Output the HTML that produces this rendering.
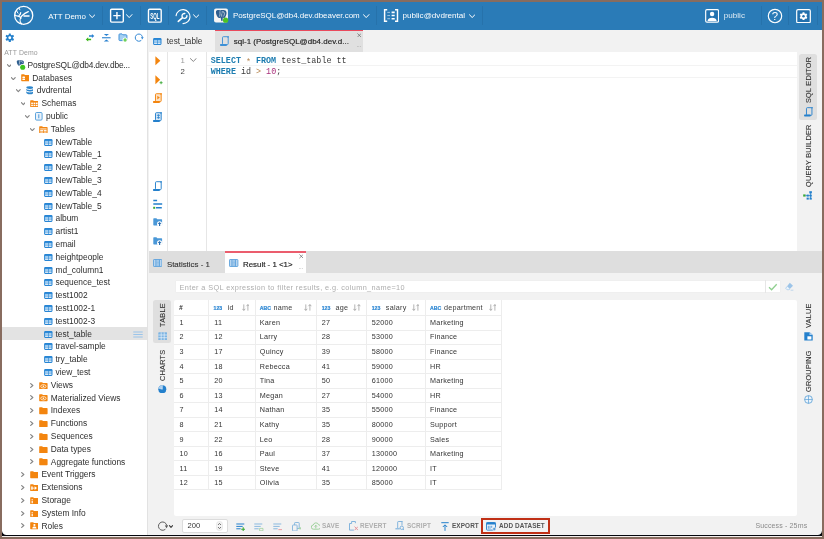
<!DOCTYPE html>
<html><head><meta charset="utf-8"><title>DBeaver</title>
<style>
html,body{margin:0;padding:0}
body{width:824px;height:539px;overflow:hidden;background:#886c5f;font-family:"Liberation Sans",sans-serif;position:relative}
div,span,svg{position:absolute;box-sizing:border-box}
span{white-space:nowrap}
#blk{left:2px;top:2px;width:820px;height:534px;background:#05070d}
#wl{left:2px;top:536px;width:820px;height:1px;background:#f3efec}
#app{will-change:transform;left:0;top:0;width:824px;height:539px;background:#f2f2f2;clip-path:inset(2px 2px 4px 2px round 0 0 4.5px 4.5px)}
#hdr{left:0;top:0;width:824px;height:29.5px;background:#2a7bb7}
.hsep{top:6px;width:1px;height:19px;background:#2672ab}
.ht{color:#fff;font-size:8px;line-height:10px;top:10.6px}
#left{left:2px;top:29px;width:145px;height:510px;background:#fff}
#hdr{z-index:3}
.tr{left:0;height:12.8px;width:145px}
.tt{font-size:8.4px;line-height:12.8px;color:#2e2e2e;top:1.5px}
.vt{font-size:7.3px;color:#333;transform-origin:0 0;transform:rotate(-90deg);line-height:10px;letter-spacing:0.25px;-webkit-text-stroke:0.1px #333}
.tb{font-size:7.2px;line-height:12px;top:520px;font-weight:bold;letter-spacing:0.1px;transform:scaleX(.89);transform-origin:0 0}
.cell{font-size:7.1px;line-height:10px;color:#333;letter-spacing:0.25px}
.hl{height:1px;background:#ededed}
.vl{width:1px;background:#ededed}
.kw{color:#1c7cb0;font-weight:bold}
.op{color:#b98a55}
.num{color:#a8307a}
</style></head><body>
<div id="blk"></div><div id="wl"></div>
<div id="app">

<div id="hdr">
<svg style="left:13px;top:5px" width="21" height="21" viewBox="13 5 21 21"><g fill="none" stroke="#fff" stroke-width="1.25" stroke-linecap="round"><circle cx="23.7" cy="15.4" r="9.05" stroke-width="1.3"/><path d="M21.5 23.9C19.5 21.5 19.7 18 22 15.7 23.8 14 26 12.6 28.3 11.6"/><path d="M24 15.9h5" stroke-width="1.5"/><path d="M15.1 15.2c1.2.8 2.5.9 3.7 1.2 1 .3 1.7.9 2.2 1.9"/><path d="M20.7 12.6c-.1 1.2-.6 2.2-1.7 2.9"/><path d="M19.2 7.6c-.1.8.1 1.5.6 2.2" stroke-width="1"/><path d="M16.7 10.7c.2 1 .6 1.8 1.3 2.5" stroke-width="1"/></g></svg>
<span style="left:48.2px;top:11px;font-size:7.95px;line-height:12px;color:#fff">ATT Demo</span>
<svg style="position:absolute;left:88.6px;top:13.6px" width="6.4" height="4.6" viewBox="0 0 6.4 4.6"><polyline points="0.4,0.6 3.2,3.6 6,0.6" fill="none" stroke="#fff" stroke-width="1" stroke-linecap="round" stroke-linejoin="round"/></svg>
<div class="hsep" style="left:102.4px"></div>
<svg style="left:109px;top:8px" width="16" height="16" viewBox="109 8 16 16"><rect x="110.6" y="9.2" width="12.7" height="12.9" rx="1.1" fill="#2370ae" stroke="#fff" stroke-width="1.4"/><path d="M116.95 12v7.3M113.3 15.65h7.3" stroke="#fff" stroke-width="1.4" fill="none"/></svg>
<svg style="position:absolute;left:126.4px;top:13.8px" width="6.4" height="4.6" viewBox="0 0 6.4 4.6"><polyline points="0.4,0.6 3.2,3.6 6,0.6" fill="none" stroke="#fff" stroke-width="1" stroke-linecap="round" stroke-linejoin="round"/></svg>
<div class="hsep" style="left:140.2px"></div>
<svg style="left:147px;top:8px" width="16" height="16" viewBox="147 8 16 16"><rect x="148.5" y="9.3" width="12.7" height="12.8" rx="1.2" fill="#2370ae" stroke="#fff" stroke-width="1.4"/><text x="154.9" y="18.5" text-anchor="middle" font-family="Liberation Sans, sans-serif" font-weight="bold" font-size="8.2" fill="#fff" textLength="9.4" lengthAdjust="spacingAndGlyphs">SQL</text></svg>
<div class="hsep" style="left:168.2px"></div>
<svg style="left:174px;top:7.5px" width="18" height="18" viewBox="174 7 18 18"><g fill="none" stroke="#fff" stroke-linecap="round"><path d="M176.07 14.63A7 7 0 1 1 183 22.6" stroke-width="1.15"/><path d="M178.3 20.4L182.3 16.8" stroke-width="1.6"/><path d="M186.9 14.7A2.45 2.45 0 1 1 184.8 12.5" stroke-width="1.35"/></g></svg>
<svg style="position:absolute;left:193.1px;top:13.6px" width="6.4" height="4.6" viewBox="0 0 6.4 4.6"><polyline points="0.4,0.6 3.2,3.6 6,0.6" fill="none" stroke="#fff" stroke-width="1" stroke-linecap="round" stroke-linejoin="round"/></svg>
<div class="hsep" style="left:206px"></div>
<svg style="left:213px;top:8px" width="17" height="16" viewBox="213 8 17 16"><rect x="214.05" y="8.5" width="13.9" height="14" rx="1.9" fill="#f7f6f5"/><path d="M216 11.2C216.5 9.8 219 9.6 220 10.4 222 9.6 225 9.8 226 11 227.2 12.6 226.4 15.6 225 17.4 224.2 18.2 223.2 18 222.8 17.6L222.6 20.6C222.4 21.5 221.4 21.5 221.2 20.6L220.6 17.4C219.8 18.4 218.4 18.4 217.6 17 216.6 15.4 215.6 13 216 11.2Z" fill="#2f5f8f"/><g fill="none" stroke="#f7f6f5" stroke-width=".6"><path d="M219.9 11.3c.3 1.8.2 3.6-.3 5.3"/><path d="M221.5 12c1.3-.9 3-.3 3 1.5 0 1.2-.5 2.2-1.1 3"/><path d="M221.7 13.5v3.2"/></g><circle cx="223" cy="12.7" r=".5" fill="#f7f6f5"/><circle cx="225.6" cy="20.2" r="2.65" fill="#4cc322"/></svg>
<span id="h_pg" style="left:232.9px;top:10px;font-size:7.96px;line-height:12px;color:#fff">PostgreSQL@db4.dev.dbeaver.com</span>
<svg style="position:absolute;left:363.2px;top:13.6px" width="6.4" height="4.6" viewBox="0 0 6.4 4.6"><polyline points="0.4,0.6 3.2,3.6 6,0.6" fill="none" stroke="#fff" stroke-width="1" stroke-linecap="round" stroke-linejoin="round"/></svg>
<div class="hsep" style="left:376px"></div>
<svg style="left:383px;top:8px" width="16" height="15" viewBox="383 8 16 15"><g fill="none" stroke="#fff" stroke-width="1.45"><path d="M387.2 9.7H384.6V21.3H387.2M395 9.7H397.5V21.3H395"/></g><g stroke="#fff"><path d="M387.3 12.4h2.7M387.3 15.55h2.7M387.3 18.7h2.7" stroke-width=".9" opacity=".6"/><path d="M391.6 12.4h3.1M391.6 15.55h3.1M391.6 18.7h3.1" stroke-width="1.6"/></g></svg>
<span id="h_pub" style="left:402.5px;top:10px;font-size:8.1px;line-height:12px;color:#fff">public@dvdrental</span>
<svg style="position:absolute;left:468.7px;top:13.6px" width="6.4" height="4.6" viewBox="0 0 6.4 4.6"><polyline points="0.4,0.6 3.2,3.6 6,0.6" fill="none" stroke="#fff" stroke-width="1" stroke-linecap="round" stroke-linejoin="round"/></svg>
<div class="hsep" style="left:482px"></div>
<svg style="left:704.6px;top:8.6px" width="14.4" height="14" viewBox="0 0 15 14.6"><rect x=".7" y=".7" width="13.4" height="13" rx="1.3" fill="#2473b0" stroke="#fff" stroke-width="1.2"/><circle cx="7.4" cy="5.2" r="2.3" fill="#fff"/><path d="M2.6 12.6c.3-2.6 2.2-3.6 4.8-3.6s4.5 1 4.8 3.6z" fill="#fff"/></svg>
<span id="h_user" style="left:723.8px;top:10px;font-size:8.1px;line-height:12px;color:#fff;opacity:.85">public</span>
<div class="hsep" style="left:760.6px"></div>
<svg style="left:766.6px;top:7.6px" width="16" height="16" viewBox="0 0 16 16"><circle cx="8" cy="8" r="6.7" fill="none" stroke="#fff" stroke-width="1.15"/><text x="8" y="12" text-anchor="middle" font-family="Liberation Sans, sans-serif" font-size="11.4" fill="#fff">?</text></svg>
<div class="hsep" style="left:788.2px"></div>
<svg style="left:795.8px;top:8.5px" width="15" height="14.4" viewBox="0 0 15 14.4"><rect x=".7" y=".7" width="13.6" height="13" rx="1.3" fill="#2270ad" stroke="#fff" stroke-width="1.2"/><g transform="translate(7.5 7.2)" fill="#fff"><circle r="2.9"/><g><rect x="-1.05" y="-3.9" width="2.1" height="7.8" rx=".4"/><rect x="-1.05" y="-3.9" width="2.1" height="7.8" rx=".4" transform="rotate(60)"/><rect x="-1.05" y="-3.9" width="2.1" height="7.8" rx=".4" transform="rotate(120)"/></g><circle r="1.25" fill="#2270ad"/></g></svg>
<div class="hsep" style="left:817.4px"></div>
</div>
<div id="left">
<svg style="left:3.2px;top:3.9px" width="9.6" height="9.6" viewBox="-5 -5 10 10"><g fill="#2480cc"><circle r="3.1"/><rect x="-1.1" y="-4.6" width="2.2" height="9.2" rx=".5"/><rect x="-1.1" y="-4.6" width="2.2" height="9.2" rx=".5" transform="rotate(60)"/><rect x="-1.1" y="-4.6" width="2.2" height="9.2" rx=".5" transform="rotate(120)"/></g><circle r="1.5" fill="#fff"/></svg>
<svg style="left:83px;top:4px" width="12" height="9" viewBox="85 33 12 9"><path d="M89 35.25h2.9v-1.3l2.4 2.05-2.4 2.05v-1.3H89z" fill="#2a82d0"/><path d="M91.1 38.65h-2.9v-1.3l-2.4 2.05 2.4 2.05v-1.3h2.9z" fill="#3db81a"/></svg>
<svg style="left:100px;top:4px" width="10" height="9" viewBox="102 33 10 9"><g fill="#2a82d0"><rect x="102" y="37.2" width="8.6" height="1.1"/><path d="M103.8 33.9h5.2l-2.6 2.2z"/><path d="M103.8 41.6h5.2l-2.6-2.2z"/></g></svg>
<svg style="left:116px;top:4px" width="12" height="9" viewBox="118 33 12 9"><path d="M119 34.7c0-.5.3-.8.8-.8h2.2l.9.9h3.2c.5 0 .8.3.8.8v4.2c0 .5-.3.8-.8.8h-6.3c-.5 0-.8-.3-.8-.8z" fill="#a5d0f2" stroke="#3d8fd8" stroke-width=".95"/><circle cx="125.1" cy="40" r="2.6" fill="#fff"/><circle cx="125.1" cy="40" r="1.65" fill="#6fcf5c"/></svg>
<svg style="left:131.8px;top:3.7px" width="10" height="9" viewBox="0 0 10 9"><path d="M7.3 7.3A3.6 3.6 0 1 1 8.4 3.9" fill="none" stroke="#3488d4" stroke-width="1"/><path d="M9.6 3.9L8.4 6.4 6.9 4.3z" fill="#3488d4"/></svg>
<span id="attdemo" style="left:2.2px;top:18px;font-size:6.9px;line-height:12px;color:#9a9a9a;letter-spacing:.1px">ATT Demo</span>
<div class="tr" style="top:29.8px">
<svg style="position:absolute;left:4.7px;top:5.1px" width="4.6" height="3.6" viewBox="0 0 4.6 3.6"><polyline points="0.4,0.6 2.3,2.6 4.199999999999999,0.6" fill="none" stroke="#858585" stroke-width="1.15" stroke-linecap="round" stroke-linejoin="round"/></svg>
<svg style="left:14px;top:1.4px" width="10.5" height="10.5" viewBox="0 0 10.5 10.5"><g transform="translate(-142.8 -6.4) scale(.665)"><path d="M216 11.2C216.5 9.8 219 9.6 220 10.4 222 9.6 225 9.8 226 11 227.2 12.6 226.4 15.6 225 17.4 224.2 18.2 223.2 18 222.8 17.6L222.6 20.6C222.4 21.5 221.4 21.5 221.2 20.6L220.6 17.4C219.8 18.4 218.4 18.4 217.6 17 216.6 15.4 215.6 13 216 11.2Z" fill="#2f5f8f"/><g fill="none" stroke="#fff" stroke-width=".8"><path d="M219.9 11.3c.3 1.8.2 3.6-.3 5.3"/><path d="M221.5 12c1.3-.9 3-.3 3 1.5"/></g></g><circle cx="6.7" cy="7.2" r="3.1" fill="#fff"/><circle cx="6.7" cy="7.2" r="2.55" fill="#3ec41e"/></svg>
<span style="left:25.5px;top:0.2px;font-size:8.4px;line-height:12px;color:#2e2e2e;letter-spacing:-.17px">PostgreSQL@db4.dev.dbe...</span>
</div>
<div class="tr" style="top:42.6px">
<svg style="position:absolute;left:9.4px;top:5.1px" width="4.6" height="3.6" viewBox="0 0 4.6 3.6"><polyline points="0.4,0.6 2.3,2.6 4.199999999999999,0.6" fill="none" stroke="#858585" stroke-width="1.15" stroke-linecap="round" stroke-linejoin="round"/></svg>
<svg style="left:18.5px;top:2.9px" width="8.8" height="7.4" viewBox="0 0 8.8 7.4"><path d="M.2 .8c0-.4.2-.6.6-.6h2.3l.9.9H8c.4 0 .6.2.6.6v4.9c0 .4-.2.6-.6.6H.8c-.4 0-.6-.2-.6-.6z" fill="#f3850f"/><g fill="#fff"><rect x="1.4" y="2.6" width="2.6" height="1.4" rx=".5"/><rect x="1.4" y="4.5" width="2.6" height="1.6" rx=".5"/></g></svg>
<span style="left:30.2px;top:0.4px;font-size:8.4px;line-height:12px;color:#2e2e2e">Databases</span>
</div>
<div class="tr" style="top:55.4px">
<svg style="position:absolute;left:14px;top:5.1px" width="4.6" height="3.6" viewBox="0 0 4.6 3.6"><polyline points="0.4,0.6 2.3,2.6 4.199999999999999,0.6" fill="none" stroke="#858585" stroke-width="1.15" stroke-linecap="round" stroke-linejoin="round"/></svg>
<svg style="left:23.9px;top:2.1px" width="7.6" height="8.6" viewBox="0 0 7.6 8.6"><g fill="#2d86cc"><ellipse cx="3.8" cy="1.6" rx="3.5" ry="1.4"/><path d="M.3 2.7c.5.8 2 1.2 3.5 1.2s3-.4 3.5-1.2v1.4c0 .8-1.6 1.4-3.5 1.4S.3 4.9.3 4.1z"/><path d="M.3 5.2c.5.8 2 1.2 3.5 1.2s3-.4 3.5-1.2v1.6c0 .8-1.6 1.5-3.5 1.5S.3 7.6.3 6.8z"/></g></svg>
<span style="left:34.8px;top:-0.4px;font-size:8.4px;line-height:12px;color:#2e2e2e">dvdrental</span>
</div>
<div class="tr" style="top:68.2px">
<svg style="position:absolute;left:18.7px;top:5.1px" width="4.6" height="3.6" viewBox="0 0 4.6 3.6"><polyline points="0.4,0.6 2.3,2.6 4.199999999999999,0.6" fill="none" stroke="#858585" stroke-width="1.15" stroke-linecap="round" stroke-linejoin="round"/></svg>
<svg style="left:27.7px;top:2.9px" width="8.8" height="7.4" viewBox="0 0 8.8 7.4"><path d="M.2 .8c0-.4.2-.6.6-.6h2.3l.9.9H8c.4 0 .6.2.6.6v4.9c0 .4-.2.6-.6.6H.8c-.4 0-.6-.2-.6-.6z" fill="#f3850f"/><g fill="#fff"><rect x="1.2" y="2.6" width="1.7" height="1.4"/><rect x="3.55" y="2.6" width="1.7" height="1.4"/><rect x="5.9" y="2.6" width="1.7" height="1.4"/><rect x="1.2" y="4.7" width="1.7" height="1.4"/><rect x="3.55" y="4.7" width="1.7" height="1.4"/><rect x="5.9" y="4.7" width="1.7" height="1.4"/></g></svg>
<span style="left:39.5px;top:-0.2px;font-size:8.4px;line-height:12px;color:#2e2e2e">Schemas</span>
</div>
<div class="tr" style="top:81px">
<svg style="position:absolute;left:23.3px;top:5.1px" width="4.6" height="3.6" viewBox="0 0 4.6 3.6"><polyline points="0.4,0.6 2.3,2.6 4.199999999999999,0.6" fill="none" stroke="#858585" stroke-width="1.15" stroke-linecap="round" stroke-linejoin="round"/></svg>
<svg style="left:33px;top:2.1px" width="7.6" height="8.6" viewBox="0 0 7.6 8.6"><rect x=".5" y=".5" width="6.6" height="7.6" rx="1.1" fill="#e9f2fb" stroke="#4a98d8" stroke-width=".9"/><rect x="3.3" y="2.3" width="1" height="4" fill="#4a98d8"/></svg>
<span style="left:44.1px;top:0px;font-size:8.4px;line-height:12px;color:#2e2e2e">public</span>
</div>
<div class="tr" style="top:93.8px">
<svg style="position:absolute;left:28px;top:5.1px" width="4.6" height="3.6" viewBox="0 0 4.6 3.6"><polyline points="0.4,0.6 2.3,2.6 4.199999999999999,0.6" fill="none" stroke="#858585" stroke-width="1.15" stroke-linecap="round" stroke-linejoin="round"/></svg>
<svg style="left:36.9px;top:2.9px" width="8.8" height="7.4" viewBox="0 0 8.8 7.4"><path d="M.2 .8c0-.4.2-.6.6-.6h2.3l.9.9H8c.4 0 .6.2.6.6v4.9c0 .4-.2.6-.6.6H.8c-.4 0-.6-.2-.6-.6z" fill="#f3850f"/><g fill="#fff"><rect x="1.2" y="2.5" width="6.4" height=".9"/><rect x="1.2" y="4.1" width="2.8" height="1"/><rect x="4.7" y="4.1" width="2.9" height="1"/><rect x="1.2" y="5.6" width="2.8" height=".9"/><rect x="4.7" y="5.6" width="2.9" height=".9"/></g></svg>
<span style="left:48.8px;top:0.2px;font-size:8.4px;line-height:12px;color:#2e2e2e">Tables</span>
</div>
<div class="tr" style="top:106.6px">
<svg style="left:42px;top:3px" width="8.6" height="7" viewBox="0 0 8.6 7"><rect x=".1" y=".1" width="8.4" height="6.8" rx="1.1" fill="#2785d4"/><g fill="#9ccbf1"><rect x="1.1" y="1.9" width="2.9" height="2.1"/><rect x="4.6" y="1.9" width="2.9" height="2.1"/></g><g fill="#fff"><rect x="1.1" y="4.5" width="2.9" height="1.3"/><rect x="4.6" y="4.5" width="2.9" height="1.3"/></g></svg>
<span style="left:53.5px;top:0.4px;font-size:8.4px;line-height:12px;color:#2e2e2e">NewTable</span>
</div>
<div class="tr" style="top:119.4px">
<svg style="left:42px;top:3px" width="8.6" height="7" viewBox="0 0 8.6 7"><rect x=".1" y=".1" width="8.4" height="6.8" rx="1.1" fill="#2785d4"/><g fill="#9ccbf1"><rect x="1.1" y="1.9" width="2.9" height="2.1"/><rect x="4.6" y="1.9" width="2.9" height="2.1"/></g><g fill="#fff"><rect x="1.1" y="4.5" width="2.9" height="1.3"/><rect x="4.6" y="4.5" width="2.9" height="1.3"/></g></svg>
<span style="left:53.5px;top:-0.4px;font-size:8.4px;line-height:12px;color:#2e2e2e">NewTable_1</span>
</div>
<div class="tr" style="top:132.2px">
<svg style="left:42px;top:3px" width="8.6" height="7" viewBox="0 0 8.6 7"><rect x=".1" y=".1" width="8.4" height="6.8" rx="1.1" fill="#2785d4"/><g fill="#9ccbf1"><rect x="1.1" y="1.9" width="2.9" height="2.1"/><rect x="4.6" y="1.9" width="2.9" height="2.1"/></g><g fill="#fff"><rect x="1.1" y="4.5" width="2.9" height="1.3"/><rect x="4.6" y="4.5" width="2.9" height="1.3"/></g></svg>
<span style="left:53.5px;top:-0.2px;font-size:8.4px;line-height:12px;color:#2e2e2e">NewTable_2</span>
</div>
<div class="tr" style="top:145px">
<svg style="left:42px;top:3px" width="8.6" height="7" viewBox="0 0 8.6 7"><rect x=".1" y=".1" width="8.4" height="6.8" rx="1.1" fill="#2785d4"/><g fill="#9ccbf1"><rect x="1.1" y="1.9" width="2.9" height="2.1"/><rect x="4.6" y="1.9" width="2.9" height="2.1"/></g><g fill="#fff"><rect x="1.1" y="4.5" width="2.9" height="1.3"/><rect x="4.6" y="4.5" width="2.9" height="1.3"/></g></svg>
<span style="left:53.5px;top:0px;font-size:8.4px;line-height:12px;color:#2e2e2e">NewTable_3</span>
</div>
<div class="tr" style="top:157.8px">
<svg style="left:42px;top:3px" width="8.6" height="7" viewBox="0 0 8.6 7"><rect x=".1" y=".1" width="8.4" height="6.8" rx="1.1" fill="#2785d4"/><g fill="#9ccbf1"><rect x="1.1" y="1.9" width="2.9" height="2.1"/><rect x="4.6" y="1.9" width="2.9" height="2.1"/></g><g fill="#fff"><rect x="1.1" y="4.5" width="2.9" height="1.3"/><rect x="4.6" y="4.5" width="2.9" height="1.3"/></g></svg>
<span style="left:53.5px;top:0.2px;font-size:8.4px;line-height:12px;color:#2e2e2e">NewTable_4</span>
</div>
<div class="tr" style="top:170.6px">
<svg style="left:42px;top:3px" width="8.6" height="7" viewBox="0 0 8.6 7"><rect x=".1" y=".1" width="8.4" height="6.8" rx="1.1" fill="#2785d4"/><g fill="#9ccbf1"><rect x="1.1" y="1.9" width="2.9" height="2.1"/><rect x="4.6" y="1.9" width="2.9" height="2.1"/></g><g fill="#fff"><rect x="1.1" y="4.5" width="2.9" height="1.3"/><rect x="4.6" y="4.5" width="2.9" height="1.3"/></g></svg>
<span style="left:53.5px;top:0.4px;font-size:8.4px;line-height:12px;color:#2e2e2e">NewTable_5</span>
</div>
<div class="tr" style="top:183.4px">
<svg style="left:42px;top:3px" width="8.6" height="7" viewBox="0 0 8.6 7"><rect x=".1" y=".1" width="8.4" height="6.8" rx="1.1" fill="#2785d4"/><g fill="#9ccbf1"><rect x="1.1" y="1.9" width="2.9" height="2.1"/><rect x="4.6" y="1.9" width="2.9" height="2.1"/></g><g fill="#fff"><rect x="1.1" y="4.5" width="2.9" height="1.3"/><rect x="4.6" y="4.5" width="2.9" height="1.3"/></g></svg>
<span style="left:53.5px;top:-0.4px;font-size:8.4px;line-height:12px;color:#2e2e2e">album</span>
</div>
<div class="tr" style="top:196.2px">
<svg style="left:42px;top:3px" width="8.6" height="7" viewBox="0 0 8.6 7"><rect x=".1" y=".1" width="8.4" height="6.8" rx="1.1" fill="#2785d4"/><g fill="#9ccbf1"><rect x="1.1" y="1.9" width="2.9" height="2.1"/><rect x="4.6" y="1.9" width="2.9" height="2.1"/></g><g fill="#fff"><rect x="1.1" y="4.5" width="2.9" height="1.3"/><rect x="4.6" y="4.5" width="2.9" height="1.3"/></g></svg>
<span style="left:53.5px;top:-0.2px;font-size:8.4px;line-height:12px;color:#2e2e2e">artist1</span>
</div>
<div class="tr" style="top:209px">
<svg style="left:42px;top:3px" width="8.6" height="7" viewBox="0 0 8.6 7"><rect x=".1" y=".1" width="8.4" height="6.8" rx="1.1" fill="#2785d4"/><g fill="#9ccbf1"><rect x="1.1" y="1.9" width="2.9" height="2.1"/><rect x="4.6" y="1.9" width="2.9" height="2.1"/></g><g fill="#fff"><rect x="1.1" y="4.5" width="2.9" height="1.3"/><rect x="4.6" y="4.5" width="2.9" height="1.3"/></g></svg>
<span style="left:53.5px;top:0px;font-size:8.4px;line-height:12px;color:#2e2e2e">email</span>
</div>
<div class="tr" style="top:221.8px">
<svg style="left:42px;top:3px" width="8.6" height="7" viewBox="0 0 8.6 7"><rect x=".1" y=".1" width="8.4" height="6.8" rx="1.1" fill="#2785d4"/><g fill="#9ccbf1"><rect x="1.1" y="1.9" width="2.9" height="2.1"/><rect x="4.6" y="1.9" width="2.9" height="2.1"/></g><g fill="#fff"><rect x="1.1" y="4.5" width="2.9" height="1.3"/><rect x="4.6" y="4.5" width="2.9" height="1.3"/></g></svg>
<span style="left:53.5px;top:0.2px;font-size:8.4px;line-height:12px;color:#2e2e2e">heightpeople</span>
</div>
<div class="tr" style="top:234.6px">
<svg style="left:42px;top:3px" width="8.6" height="7" viewBox="0 0 8.6 7"><rect x=".1" y=".1" width="8.4" height="6.8" rx="1.1" fill="#2785d4"/><g fill="#9ccbf1"><rect x="1.1" y="1.9" width="2.9" height="2.1"/><rect x="4.6" y="1.9" width="2.9" height="2.1"/></g><g fill="#fff"><rect x="1.1" y="4.5" width="2.9" height="1.3"/><rect x="4.6" y="4.5" width="2.9" height="1.3"/></g></svg>
<span style="left:53.5px;top:0.4px;font-size:8.4px;line-height:12px;color:#2e2e2e">md_column1</span>
</div>
<div class="tr" style="top:247.4px">
<svg style="left:42px;top:3px" width="8.6" height="7" viewBox="0 0 8.6 7"><rect x=".1" y=".1" width="8.4" height="6.8" rx="1.1" fill="#2785d4"/><g fill="#9ccbf1"><rect x="1.1" y="1.9" width="2.9" height="2.1"/><rect x="4.6" y="1.9" width="2.9" height="2.1"/></g><g fill="#fff"><rect x="1.1" y="4.5" width="2.9" height="1.3"/><rect x="4.6" y="4.5" width="2.9" height="1.3"/></g></svg>
<span style="left:53.5px;top:-0.4px;font-size:8.4px;line-height:12px;color:#2e2e2e">sequence_test</span>
</div>
<div class="tr" style="top:260.2px">
<svg style="left:42px;top:3px" width="8.6" height="7" viewBox="0 0 8.6 7"><rect x=".1" y=".1" width="8.4" height="6.8" rx="1.1" fill="#2785d4"/><g fill="#9ccbf1"><rect x="1.1" y="1.9" width="2.9" height="2.1"/><rect x="4.6" y="1.9" width="2.9" height="2.1"/></g><g fill="#fff"><rect x="1.1" y="4.5" width="2.9" height="1.3"/><rect x="4.6" y="4.5" width="2.9" height="1.3"/></g></svg>
<span style="left:53.5px;top:-0.2px;font-size:8.4px;line-height:12px;color:#2e2e2e">test1002</span>
</div>
<div class="tr" style="top:273px">
<svg style="left:42px;top:3px" width="8.6" height="7" viewBox="0 0 8.6 7"><rect x=".1" y=".1" width="8.4" height="6.8" rx="1.1" fill="#2785d4"/><g fill="#9ccbf1"><rect x="1.1" y="1.9" width="2.9" height="2.1"/><rect x="4.6" y="1.9" width="2.9" height="2.1"/></g><g fill="#fff"><rect x="1.1" y="4.5" width="2.9" height="1.3"/><rect x="4.6" y="4.5" width="2.9" height="1.3"/></g></svg>
<span style="left:53.5px;top:0px;font-size:8.4px;line-height:12px;color:#2e2e2e">test1002-1</span>
</div>
<div class="tr" style="top:285.8px">
<svg style="left:42px;top:3px" width="8.6" height="7" viewBox="0 0 8.6 7"><rect x=".1" y=".1" width="8.4" height="6.8" rx="1.1" fill="#2785d4"/><g fill="#9ccbf1"><rect x="1.1" y="1.9" width="2.9" height="2.1"/><rect x="4.6" y="1.9" width="2.9" height="2.1"/></g><g fill="#fff"><rect x="1.1" y="4.5" width="2.9" height="1.3"/><rect x="4.6" y="4.5" width="2.9" height="1.3"/></g></svg>
<span style="left:53.5px;top:0.2px;font-size:8.4px;line-height:12px;color:#2e2e2e">test1002-3</span>
</div>
<div style="left:0;top:298px;width:145px;height:13.2px;background:#e3e3e3"></div>
<div class="tr" style="top:298.6px">
<svg style="left:42px;top:3px" width="8.6" height="7" viewBox="0 0 8.6 7"><rect x=".1" y=".1" width="8.4" height="6.8" rx="1.1" fill="#2785d4"/><g fill="#9ccbf1"><rect x="1.1" y="1.9" width="2.9" height="2.1"/><rect x="4.6" y="1.9" width="2.9" height="2.1"/></g><g fill="#fff"><rect x="1.1" y="4.5" width="2.9" height="1.3"/><rect x="4.6" y="4.5" width="2.9" height="1.3"/></g></svg>
<span style="left:53.5px;top:0.4px;font-size:8.4px;line-height:12px;color:#2e2e2e">test_table</span>
<svg style="left:131px;top:3.2px" width="10" height="7" viewBox="0 0 10 7"><path d="M.3 1h9.4M.3 3.5h9.4M.3 6h9.4" stroke="#96c2ea" stroke-width=".95"/></svg>
</div>
<div class="tr" style="top:311.4px">
<svg style="left:42px;top:3px" width="8.6" height="7" viewBox="0 0 8.6 7"><rect x=".1" y=".1" width="8.4" height="6.8" rx="1.1" fill="#2785d4"/><g fill="#9ccbf1"><rect x="1.1" y="1.9" width="2.9" height="2.1"/><rect x="4.6" y="1.9" width="2.9" height="2.1"/></g><g fill="#fff"><rect x="1.1" y="4.5" width="2.9" height="1.3"/><rect x="4.6" y="4.5" width="2.9" height="1.3"/></g></svg>
<span style="left:53.5px;top:-0.4px;font-size:8.4px;line-height:12px;color:#2e2e2e">travel-sample</span>
</div>
<div class="tr" style="top:324.2px">
<svg style="left:42px;top:3px" width="8.6" height="7" viewBox="0 0 8.6 7"><rect x=".1" y=".1" width="8.4" height="6.8" rx="1.1" fill="#2785d4"/><g fill="#9ccbf1"><rect x="1.1" y="1.9" width="2.9" height="2.1"/><rect x="4.6" y="1.9" width="2.9" height="2.1"/></g><g fill="#fff"><rect x="1.1" y="4.5" width="2.9" height="1.3"/><rect x="4.6" y="4.5" width="2.9" height="1.3"/></g></svg>
<span style="left:53.5px;top:-0.2px;font-size:8.4px;line-height:12px;color:#2e2e2e">try_table</span>
</div>
<div class="tr" style="top:337px">
<svg style="left:42px;top:3px" width="8.6" height="7" viewBox="0 0 8.6 7"><rect x=".1" y=".1" width="8.4" height="6.8" rx="1.1" fill="#2785d4"/><g fill="#9ccbf1"><rect x="1.1" y="1.9" width="2.9" height="2.1"/><rect x="4.6" y="1.9" width="2.9" height="2.1"/></g><g fill="#fff"><rect x="1.1" y="4.5" width="2.9" height="1.3"/><rect x="4.6" y="4.5" width="2.9" height="1.3"/></g></svg>
<span style="left:53.5px;top:-0px;font-size:8.4px;line-height:12px;color:#2e2e2e">view_test</span>
</div>
<div class="tr" style="top:349.8px">
<svg style="position:absolute;left:28.4px;top:3.9px" width="3.6" height="5" viewBox="0 0 3.6 5"><polyline points="0.7,0.6 2.8,2.5 0.7,4.4" fill="none" stroke="#858585" stroke-width="1.2" stroke-linecap="round" stroke-linejoin="round"/></svg>
<svg style="left:36.9px;top:2.9px" width="8.8" height="7.4" viewBox="0 0 8.8 7.4"><path d="M.2 .8c0-.4.2-.6.6-.6h2.3l.9.9H8c.4 0 .6.2.6.6v4.9c0 .4-.2.6-.6.6H.8c-.4 0-.6-.2-.6-.6z" fill="#f3850f"/><ellipse cx="4.4" cy="4.3" rx="2.7" ry="1.7" fill="none" stroke="#fff" stroke-width=".7"/><circle cx="4.4" cy="4.3" r=".8" fill="#fff"/></svg>
<span style="left:48.8px;top:0.2px;font-size:8.4px;line-height:12px;color:#2e2e2e">Views</span>
</div>
<div class="tr" style="top:362.6px">
<svg style="position:absolute;left:28.4px;top:3.9px" width="3.6" height="5" viewBox="0 0 3.6 5"><polyline points="0.7,0.6 2.8,2.5 0.7,4.4" fill="none" stroke="#858585" stroke-width="1.2" stroke-linecap="round" stroke-linejoin="round"/></svg>
<svg style="left:36.9px;top:2.9px" width="8.8" height="7.4" viewBox="0 0 8.8 7.4"><path d="M.2 .8c0-.4.2-.6.6-.6h2.3l.9.9H8c.4 0 .6.2.6.6v4.9c0 .4-.2.6-.6.6H.8c-.4 0-.6-.2-.6-.6z" fill="#f3850f"/><ellipse cx="4.4" cy="4.3" rx="2.7" ry="1.7" fill="none" stroke="#fff" stroke-width=".7"/><circle cx="4.4" cy="4.3" r=".8" fill="#fff"/></svg>
<span style="left:48.8px;top:0.4px;font-size:8.4px;line-height:12px;color:#2e2e2e">Materialized Views</span>
</div>
<div class="tr" style="top:375.4px">
<svg style="position:absolute;left:28.4px;top:3.9px" width="3.6" height="5" viewBox="0 0 3.6 5"><polyline points="0.7,0.6 2.8,2.5 0.7,4.4" fill="none" stroke="#858585" stroke-width="1.2" stroke-linecap="round" stroke-linejoin="round"/></svg>
<svg style="left:36.9px;top:2.9px" width="8.8" height="7.4" viewBox="0 0 8.8 7.4"><path d="M.2 .8c0-.4.2-.6.6-.6h2.3l.9.9H8c.4 0 .6.2.6.6v4.9c0 .4-.2.6-.6.6H.8c-.4 0-.6-.2-.6-.6z" fill="#f3850f"/></svg>
<span style="left:48.8px;top:-0.4px;font-size:8.4px;line-height:12px;color:#2e2e2e">Indexes</span>
</div>
<div class="tr" style="top:388.2px">
<svg style="position:absolute;left:28.4px;top:3.9px" width="3.6" height="5" viewBox="0 0 3.6 5"><polyline points="0.7,0.6 2.8,2.5 0.7,4.4" fill="none" stroke="#858585" stroke-width="1.2" stroke-linecap="round" stroke-linejoin="round"/></svg>
<svg style="left:36.9px;top:2.9px" width="8.8" height="7.4" viewBox="0 0 8.8 7.4"><path d="M.2 .8c0-.4.2-.6.6-.6h2.3l.9.9H8c.4 0 .6.2.6.6v4.9c0 .4-.2.6-.6.6H.8c-.4 0-.6-.2-.6-.6z" fill="#f3850f"/></svg>
<span style="left:48.8px;top:-0.2px;font-size:8.4px;line-height:12px;color:#2e2e2e">Functions</span>
</div>
<div class="tr" style="top:401px">
<svg style="position:absolute;left:28.4px;top:3.9px" width="3.6" height="5" viewBox="0 0 3.6 5"><polyline points="0.7,0.6 2.8,2.5 0.7,4.4" fill="none" stroke="#858585" stroke-width="1.2" stroke-linecap="round" stroke-linejoin="round"/></svg>
<svg style="left:36.9px;top:2.9px" width="8.8" height="7.4" viewBox="0 0 8.8 7.4"><path d="M.2 .8c0-.4.2-.6.6-.6h2.3l.9.9H8c.4 0 .6.2.6.6v4.9c0 .4-.2.6-.6.6H.8c-.4 0-.6-.2-.6-.6z" fill="#f3850f"/></svg>
<span style="left:48.8px;top:-0px;font-size:8.4px;line-height:12px;color:#2e2e2e">Sequences</span>
</div>
<div class="tr" style="top:413.8px">
<svg style="position:absolute;left:28.4px;top:3.9px" width="3.6" height="5" viewBox="0 0 3.6 5"><polyline points="0.7,0.6 2.8,2.5 0.7,4.4" fill="none" stroke="#858585" stroke-width="1.2" stroke-linecap="round" stroke-linejoin="round"/></svg>
<svg style="left:36.9px;top:2.9px" width="8.8" height="7.4" viewBox="0 0 8.8 7.4"><path d="M.2 .8c0-.4.2-.6.6-.6h2.3l.9.9H8c.4 0 .6.2.6.6v4.9c0 .4-.2.6-.6.6H.8c-.4 0-.6-.2-.6-.6z" fill="#f3850f"/></svg>
<span style="left:48.8px;top:0.2px;font-size:8.4px;line-height:12px;color:#2e2e2e">Data types</span>
</div>
<div class="tr" style="top:426.6px">
<svg style="position:absolute;left:28.4px;top:3.9px" width="3.6" height="5" viewBox="0 0 3.6 5"><polyline points="0.7,0.6 2.8,2.5 0.7,4.4" fill="none" stroke="#858585" stroke-width="1.2" stroke-linecap="round" stroke-linejoin="round"/></svg>
<svg style="left:36.9px;top:2.9px" width="8.8" height="7.4" viewBox="0 0 8.8 7.4"><path d="M.2 .8c0-.4.2-.6.6-.6h2.3l.9.9H8c.4 0 .6.2.6.6v4.9c0 .4-.2.6-.6.6H.8c-.4 0-.6-.2-.6-.6z" fill="#f3850f"/></svg>
<span style="left:48.8px;top:0.4px;font-size:8.4px;line-height:12px;color:#2e2e2e">Aggregate functions</span>
</div>
<div class="tr" style="top:439.4px">
<svg style="position:absolute;left:19.1px;top:3.9px" width="3.6" height="5" viewBox="0 0 3.6 5"><polyline points="0.7,0.6 2.8,2.5 0.7,4.4" fill="none" stroke="#858585" stroke-width="1.2" stroke-linecap="round" stroke-linejoin="round"/></svg>
<svg style="left:27.7px;top:2.9px" width="8.8" height="7.4" viewBox="0 0 8.8 7.4"><path d="M.2 .8c0-.4.2-.6.6-.6h2.3l.9.9H8c.4 0 .6.2.6.6v4.9c0 .4-.2.6-.6.6H.8c-.4 0-.6-.2-.6-.6z" fill="#f3850f"/></svg>
<span style="left:39.5px;top:-0.4px;font-size:8.4px;line-height:12px;color:#2e2e2e">Event Triggers</span>
</div>
<div class="tr" style="top:452.2px">
<svg style="position:absolute;left:19.1px;top:3.9px" width="3.6" height="5" viewBox="0 0 3.6 5"><polyline points="0.7,0.6 2.8,2.5 0.7,4.4" fill="none" stroke="#858585" stroke-width="1.2" stroke-linecap="round" stroke-linejoin="round"/></svg>
<svg style="left:27.7px;top:2.9px" width="8.8" height="7.4" viewBox="0 0 8.8 7.4"><path d="M.2 .8c0-.4.2-.6.6-.6h2.3l.9.9H8c.4 0 .6.2.6.6v4.9c0 .4-.2.6-.6.6H.8c-.4 0-.6-.2-.6-.6z" fill="#f3850f"/><g fill="#fff"><rect x="1.3" y="3.7" width="3.4" height=".8"/><path d="M4.6 2.3l2.4 1.8-2.4 1.8z"/><rect x="1.3" y="2.4" width="1.3" height="3.4"/></g></svg>
<span style="left:39.5px;top:-0.2px;font-size:8.4px;line-height:12px;color:#2e2e2e">Extensions</span>
</div>
<div class="tr" style="top:465px">
<svg style="position:absolute;left:19.1px;top:3.9px" width="3.6" height="5" viewBox="0 0 3.6 5"><polyline points="0.7,0.6 2.8,2.5 0.7,4.4" fill="none" stroke="#858585" stroke-width="1.2" stroke-linecap="round" stroke-linejoin="round"/></svg>
<svg style="left:27.7px;top:2.9px" width="8.8" height="7.4" viewBox="0 0 8.8 7.4"><path d="M.2 .8c0-.4.2-.6.6-.6h2.3l.9.9H8c.4 0 .6.2.6.6v4.9c0 .4-.2.6-.6.6H.8c-.4 0-.6-.2-.6-.6z" fill="#f3850f"/><g fill="#fff"><rect x="1.6" y="2.2" width="1.2" height="1.1"/><rect x="1.6" y="3.9" width="1.2" height="2.4"/></g></svg>
<span style="left:39.5px;top:-0px;font-size:8.4px;line-height:12px;color:#2e2e2e">Storage</span>
</div>
<div class="tr" style="top:477.8px">
<svg style="position:absolute;left:19.1px;top:3.9px" width="3.6" height="5" viewBox="0 0 3.6 5"><polyline points="0.7,0.6 2.8,2.5 0.7,4.4" fill="none" stroke="#858585" stroke-width="1.2" stroke-linecap="round" stroke-linejoin="round"/></svg>
<svg style="left:27.7px;top:2.9px" width="8.8" height="7.4" viewBox="0 0 8.8 7.4"><path d="M.2 .8c0-.4.2-.6.6-.6h2.3l.9.9H8c.4 0 .6.2.6.6v4.9c0 .4-.2.6-.6.6H.8c-.4 0-.6-.2-.6-.6z" fill="#f3850f"/><g fill="#fff"><rect x="1.6" y="2.2" width="1.2" height="1.1"/><rect x="1.6" y="3.9" width="1.2" height="2.4"/></g></svg>
<span style="left:39.5px;top:0.2px;font-size:8.4px;line-height:12px;color:#2e2e2e">System Info</span>
</div>
<div class="tr" style="top:490.6px">
<svg style="position:absolute;left:19.1px;top:3.9px" width="3.6" height="5" viewBox="0 0 3.6 5"><polyline points="0.7,0.6 2.8,2.5 0.7,4.4" fill="none" stroke="#858585" stroke-width="1.2" stroke-linecap="round" stroke-linejoin="round"/></svg>
<svg style="left:27.7px;top:2.9px" width="8.8" height="7.4" viewBox="0 0 8.8 7.4"><path d="M.2 .8c0-.4.2-.6.6-.6h2.3l.9.9H8c.4 0 .6.2.6.6v4.9c0 .4-.2.6-.6.6H.8c-.4 0-.6-.2-.6-.6z" fill="#f3850f"/><g fill="#fff"><circle cx="4.4" cy="3" r="1.1"/><path d="M2.3 6.4c.1-1.4 1-1.9 2.1-1.9s2 .5 2.1 1.9z"/></g></svg>
<span style="left:39.5px;top:0.4px;font-size:8.4px;line-height:12px;color:#2e2e2e">Roles</span>
</div>
</div>
<div style="left:147px;top:29.5px;width:1.2px;height:510px;background:#e2e2e2"></div>
<div style="left:148.5px;top:29.5px;width:675px;height:22.2px;background:#f2f2f2"></div>
<div style="left:215px;top:29.5px;width:148.2px;height:22.2px;background:#e0e0e0;border-top:1.7px solid #ea4a5c"></div>
<svg style="left:153.4px;top:37.9px" width="8.6" height="7" viewBox="0 0 8.6 7"><rect x=".1" y=".1" width="8.4" height="6.8" rx="1.1" fill="#2785d4"/><g fill="#9ccbf1"><rect x="1.1" y="1.9" width="2.9" height="2.1"/><rect x="4.6" y="1.9" width="2.9" height="2.1"/></g><g fill="#fff"><rect x="1.1" y="4.5" width="2.9" height="1.3"/><rect x="4.6" y="4.5" width="2.9" height="1.3"/></g></svg>
<span id="tab1" style="left:166.8px;top:36px;font-size:8.2px;line-height:12px;color:#333">test_table</span>
<svg style="left:219.8px;top:35.9px" width="9.4" height="10" viewBox="0 0 9.4 10"><rect x="2.5" y=".7" width="5.7" height="8" rx=".9" fill="none" stroke="#3d90d6" stroke-width=".95"/><rect x="0" y="7.9" width="6.9" height="2" rx=".7" fill="#3d90d6"/><rect x="7.2" y=".2" width="2.1" height="1.2" rx=".5" fill="#3d90d6"/></svg>
<span id="tab2" style="left:233.8px;top:36px;font-size:8px;line-height:12px;color:#222;-webkit-text-stroke:.15px #222">sql-1 (PostgreSQL@db4.dev.d...</span>
<svg style="left:356.5px;top:32.6px" width="4.6" height="4.6" viewBox="0 0 4.6 4.6"><path d="M.4 .4l3.8 3.8M4.2 .4L.4 4.2" stroke="#666" stroke-width=".7"/></svg>
<span style="left:356.6px;top:40.5px;font-size:6px;line-height:8px;color:#888;letter-spacing:-.2px">...</span>
<div style="left:149px;top:51.7px;width:648.3px;height:199px;background:#fff"></div>
<div class="vl" style="left:167px;top:51.7px;height:199px;background:#e6e6e6"></div>
<div class="vl" style="left:205.8px;top:51.7px;height:199px;background:#e6e6e6"></div>
<div class="hl" style="left:206.8px;top:64.5px;width:590.5px;background:#f3f3f3"></div>
<div class="hl" style="left:206.8px;top:77px;width:590.5px;background:#f3f3f3"></div>
<svg style="left:154.8px;top:56px" width="6" height="9.6" viewBox="0 0 6 9.6"><path d="M.4 .3L5.4 4.8.4 9.3z" fill="#f3850f"/></svg>
<svg style="left:154.8px;top:75px" width="8" height="9.6" viewBox="0 0 8 9.6"><path d="M.4 .3L5.2 4.8.4 9.3z" fill="#f3850f"/><path d="M6.1 6.2v3M4.6 7.7h3" stroke="#3aa935" stroke-width=".9"/></svg>
<svg style="left:152.8px;top:93.2px" width="9.4" height="10" viewBox="0 0 9.4 10"><rect x="2.5" y=".7" width="5.7" height="8" rx=".9" fill="#fde3c6" stroke="#f3850f" stroke-width=".95"/><rect x="0" y="7.9" width="6.9" height="2" rx=".7" fill="#f3850f"/><rect x="7.2" y=".2" width="2.1" height="1.2" rx=".5" fill="#f3850f"/><path d="M4.3 2.7l2.5 1.9-2.5 1.9z" fill="#f3850f"/></svg>
<svg style="left:152.8px;top:112.2px" width="9.4" height="10" viewBox="0 0 9.4 10"><rect x="2.5" y=".7" width="5.7" height="8" rx=".9" fill="#d9e9f8" stroke="#2480cc" stroke-width=".95"/><rect x="0" y="7.9" width="6.9" height="2" rx=".7" fill="#2480cc"/><rect x="7.2" y=".2" width="2.1" height="1.2" rx=".5" fill="#2480cc"/><g stroke="#2480cc" stroke-width=".8"><path d="M3.8 3.3h3.2M3.8 5.7h3.2M5.4 2.2v4.6"/></g></svg>
<svg style="left:153px;top:180.8px" width="9.4" height="10" viewBox="0 0 9.4 10"><rect x="2.5" y=".7" width="5.7" height="8" rx=".9" fill="#fff" stroke="#2480cc" stroke-width=".95"/><rect x="0" y="7.9" width="6.9" height="2" rx=".7" fill="#2480cc"/><rect x="7.2" y=".2" width="2.1" height="1.2" rx=".5" fill="#2480cc"/></svg>
<svg style="left:153px;top:198.6px" width="9.6" height="10" viewBox="0 0 9.6 10"><g stroke="#2480cc" stroke-width="1.5"><path d="M.3 1.6h3.8M.3 5h8.9M3 8.8h5.8"/></g><path d="M.2 7.8h2v2h-2z" fill="#3aa935"/></svg>
<svg style="left:153px;top:218.4px" width="9.8" height="9" viewBox="0 0 9.8 9"><path d="M.3 .9c0-.4.2-.6.6-.6h2.5l.9.9h4.2c.4 0 .6.2.6.6v5c0 .4-.2.6-.6.6H.9c-.4 0-.6-.2-.6-.6z" fill="#4a98d8"/><circle cx="6.6" cy="5.9" r="2.6" fill="#fff"/><path d="M6.6 3.9l1.9 2.1H7.2v1.9H6V6H4.7z" fill="#2d6fb0"/></svg>
<svg style="left:153px;top:236.8px" width="9.8" height="9" viewBox="0 0 9.8 9"><path d="M.3 .9c0-.4.2-.6.6-.6h2.5l.9.9h4.2c.4 0 .6.2.6.6v5c0 .4-.2.6-.6.6H.9c-.4 0-.6-.2-.6-.6z" fill="#4a98d8"/><circle cx="6.6" cy="5.9" r="2.6" fill="#fff"/><path d="M6.6 3.9l1.9 2.1H7.2v1.9H6V6H4.7z" fill="#2d6fb0"/></svg>
<span style="left:180.6px;top:55px;font-size:7.8px;line-height:12px;color:#9a9a9a">1</span>
<svg style="position:absolute;left:190px;top:58.4px" width="6.6" height="4.4" viewBox="0 0 6.6 4.4"><polyline points="0.4,0.6 3.3,3.4 6.199999999999999,0.6" fill="none" stroke="#777" stroke-width="0.9" stroke-linecap="round" stroke-linejoin="round"/></svg>
<span style="left:180.4px;top:66px;font-size:7.8px;line-height:12px;color:#444">2</span>
<span id="code1" style="left:210.8px;top:55px;font-size:8.38px;line-height:12px;color:#3a3a3a;font-family:'Liberation Mono',monospace;white-space:pre"><b class="kw">SELECT</b> <i class="op" style="font-style:normal;position:relative;top:1.6px">*</i> <b class="kw">FROM</b> test_table tt</span>
<span id="code2" style="left:210.8px;top:66px;font-size:8.38px;line-height:12px;color:#3a3a3a;font-family:'Liberation Mono',monospace;white-space:pre"><b class="kw">WHERE</b> id <i class="op" style="font-style:normal">&gt;</i> <i class="num" style="font-style:normal">10</i>;</span>
<div style="left:797.3px;top:51.7px;width:26px;height:490px;background:#f2f2f2"></div>
<div style="left:799.4px;top:54px;width:18px;height:66px;background:#dfdfdf;border-radius:2.5px"></div>
<span class="vt" id="v_sql" style="left:803.6px;top:103px">SQL EDITOR</span>
<svg style="left:803.8px;top:107px" width="9.2" height="9.6" viewBox="0 0 9.4 10"><rect x="2.5" y=".7" width="5.7" height="8" rx=".9" fill="none" stroke="#2480cc" stroke-width=".95"/><rect x="0" y="7.9" width="6.9" height="2" rx=".7" fill="#2480cc"/><rect x="7.2" y=".2" width="2.1" height="1.2" rx=".5" fill="#2480cc"/></svg>
<span class="vt" id="v_qb" style="left:803.6px;top:187px">QUERY BUILDER</span>
<svg style="left:803.4px;top:190.6px" width="10.4" height="9" viewBox="0 0 10.4 9"><g fill="#2480cc"><rect x="6.3" y=".2" width="2.6" height="2.2"/><rect x="3.6" y="3.6" width="2.2" height="2"/><rect x="6.6" y="3.6" width="2.2" height="2"/><rect x=".2" y="3.4" width="2.4" height="2.2" fill="#3aa935"/><rect x="3.6" y="6.6" width="2.2" height="2"/><rect x="6.6" y="6.6" width="2.2" height="2"/><rect x="7.3" y="2" width=".7" height="5"/><rect x="2.4" y="4.3" width="5" height=".6"/></g></svg>
<div style="left:148.5px;top:251px;width:675px;height:22.4px;background:#dedede"></div>
<div style="left:224.5px;top:251px;width:81px;height:22.4px;background:#fff;border-top:2px solid #eb5d6d"></div>
<svg style="left:152.8px;top:259.4px" width="9.4" height="8" viewBox="0 0 9.4 8"><rect x=".5" y=".5" width="8.4" height="7" rx=".6" fill="#b9d6f0" stroke="#5fa3dc" stroke-width=".9"/><path d="M2.9 .5v7M6.5 .5v7" stroke="#5fa3dc" stroke-width=".9"/><path d="M3.3 2h3M3.3 3.4h3M3.3 4.8h3M3.3 6.2h3" stroke="#5fa3dc" stroke-width=".5"/></svg>
<span id="rt1" style="left:166.9px;top:259px;font-size:7.9px;line-height:12px;color:#333;-webkit-text-stroke:.12px #333">Statistics - 1</span>
<svg style="left:229.4px;top:259.4px" width="9.4" height="8" viewBox="0 0 9.4 8"><rect x=".5" y=".5" width="8.4" height="7" rx=".6" fill="#b9d6f0" stroke="#5fa3dc" stroke-width=".9"/><path d="M2.9 .5v7M6.5 .5v7" stroke="#5fa3dc" stroke-width=".9"/><path d="M3.3 2h3M3.3 3.4h3M3.3 4.8h3M3.3 6.2h3" stroke="#5fa3dc" stroke-width=".5"/></svg>
<span id="rt2" style="left:243px;top:259px;font-size:7.9px;line-height:12px;color:#222;-webkit-text-stroke:.15px #222">Result - 1 &lt;1&gt;</span>
<svg style="left:298.8px;top:254.4px" width="4.6" height="4.6" viewBox="0 0 4.6 4.6"><path d="M.4 .4l3.8 3.8M4.2 .4L.4 4.2" stroke="#666" stroke-width=".7"/></svg>
<span style="left:298.6px;top:262.6px;font-size:6px;line-height:8px;color:#888;letter-spacing:-.2px">...</span>
<div style="left:174.5px;top:280.3px;width:606.2px;height:13px;background:#fff;border:1px solid #efefef;border-radius:1px"></div>
<div class="vl" style="left:765.4px;top:280.3px;height:13px;background:#e6e6e6"></div>
<span id="flt" style="left:179.5px;top:282px;font-size:7.3px;line-height:12px;color:#adadad;letter-spacing:.4px">Enter a SQL expression to filter results, e.g. column_name=10</span>
<svg style="left:768.4px;top:282.6px" width="9.6" height="8" viewBox="0 0 9.6 8"><path d="M1 4.3l2.6 2.5L8.7 1.2" fill="none" stroke="#8fcf8f" stroke-width="1.3"/></svg>
<svg style="left:784.6px;top:282.4px" width="9.4" height="9" viewBox="0 0 9.4 9"><path d="M4.8 .8L8 3.7 4 7.8H2.2L.6 6.2z" fill="#9cc4e8"/><path d="M.6 6.2L2.2 7.8H4L5 6.8 2.4 4.3z" fill="#eaf3fb" stroke="#9cc4e8" stroke-width=".5"/><path d="M5.6 8.2h2.8" stroke="#9cc4e8" stroke-width=".6"/></svg>
<div style="left:174px;top:299.6px;width:623.3px;height:216.8px;background:#fff;border-radius:2px"></div>
<div style="left:153.4px;top:300px;width:17.8px;height:43.4px;background:#dfdfdf;border-radius:2.5px"></div>
<span class="vt" id="v_tab" style="left:157.6px;top:326.5px">TABLE</span>
<svg style="left:157.6px;top:331.6px" width="9.4" height="8.8" viewBox="0 0 9.4 8.8"><rect x=".3" y=".3" width="8.8" height="8.2" rx=".7" fill="#7db4e2"/><g stroke="#e8f2fb" stroke-width=".7"><path d="M.3 3h8.8M.3 5.7h8.8M3.2 .3v8.2M6.2 .3v8.2"/></g></svg>
<span class="vt" id="v_ch" style="left:157.6px;top:381px">CHARTS</span>
<svg style="left:158.2px;top:384.8px" width="8.6" height="8.6" viewBox="0 0 8.6 8.6"><circle cx="4.3" cy="4.3" r="4" fill="#2480cc"/><path d="M4.3 4.3V.3A4 4 0 0 0 .5 3.1z" fill="#a9cdef"/><path d="M4.3 4.3L.5 3.1" stroke="#fff" stroke-width=".5"/><path d="M4.3 4.3V.3" stroke="#fff" stroke-width=".5"/></svg>
<div class="hl" style="left:174.2px;top:315px;width:327.8px"></div>
<div class="hl" style="left:174.2px;top:329.5px;width:327.8px"></div>
<div class="hl" style="left:174.2px;top:344.1px;width:327.8px"></div>
<div class="hl" style="left:174.2px;top:358.6px;width:327.8px"></div>
<div class="hl" style="left:174.2px;top:373.1px;width:327.8px"></div>
<div class="hl" style="left:174.2px;top:387.6px;width:327.8px"></div>
<div class="hl" style="left:174.2px;top:402.2px;width:327.8px"></div>
<div class="hl" style="left:174.2px;top:416.7px;width:327.8px"></div>
<div class="hl" style="left:174.2px;top:431.2px;width:327.8px"></div>
<div class="hl" style="left:174.2px;top:445.8px;width:327.8px"></div>
<div class="hl" style="left:174.2px;top:460.3px;width:327.8px"></div>
<div class="hl" style="left:174.2px;top:474.8px;width:327.8px"></div>
<div class="hl" style="left:174.2px;top:489.4px;width:327.8px"></div>
<div class="vl" style="left:208.1px;top:299.6px;height:190.3px"></div>
<div class="vl" style="left:255px;top:299.6px;height:190.3px"></div>
<div class="vl" style="left:316.3px;top:299.6px;height:190.3px"></div>
<div class="vl" style="left:366.3px;top:299.6px;height:190.3px"></div>
<div class="vl" style="left:425.1px;top:299.6px;height:190.3px"></div>
<div class="vl" style="left:501px;top:299.6px;height:190.3px"></div>
<span style="left:179px;top:302px;font-size:6.6px;line-height:12px;color:#333;font-weight:bold;font-style:italic">#</span>
<span style="left:213.6px;top:302px;font-size:5.2px;line-height:12px;color:#2f88d4;font-weight:bold;letter-spacing:0;-webkit-text-stroke:.2px #2f88d4">123</span>
<span class="hd" style="left:227.7px;top:302px;font-size:7.2px;line-height:12px;color:#3a3a3a;letter-spacing:.25px">id</span>
<svg style="left:241.6px;top:304.3px" width="7.8" height="7" viewBox="0 0 7.8 7"><g fill="none" stroke="#9a9a9a" stroke-width=".75"><path d="M1.8 .4v6M.3 4.8l1.5 1.6L3.3 4.8"/><path d="M5.9 6.6v-6M4.4 2.2L5.9.6l1.5 1.6"/></g></svg>
<span style="left:259.8px;top:302px;font-size:5.2px;line-height:12px;color:#2f88d4;font-weight:bold;letter-spacing:0;-webkit-text-stroke:.2px #2f88d4">ABC</span>
<span class="hd" style="left:273.6px;top:302px;font-size:7.2px;line-height:12px;color:#3a3a3a;letter-spacing:.25px">name</span>
<svg style="left:303.8px;top:304.3px" width="7.8" height="7" viewBox="0 0 7.8 7"><g fill="none" stroke="#9a9a9a" stroke-width=".75"><path d="M1.8 .4v6M.3 4.8l1.5 1.6L3.3 4.8"/><path d="M5.9 6.6v-6M4.4 2.2L5.9.6l1.5 1.6"/></g></svg>
<span style="left:321.7px;top:302px;font-size:5.2px;line-height:12px;color:#2f88d4;font-weight:bold;letter-spacing:0;-webkit-text-stroke:.2px #2f88d4">123</span>
<span class="hd" style="left:335.5px;top:302px;font-size:7.2px;line-height:12px;color:#3a3a3a;letter-spacing:.25px">age</span>
<svg style="left:353.3px;top:304.3px" width="7.8" height="7" viewBox="0 0 7.8 7"><g fill="none" stroke="#9a9a9a" stroke-width=".75"><path d="M1.8 .4v6M.3 4.8l1.5 1.6L3.3 4.8"/><path d="M5.9 6.6v-6M4.4 2.2L5.9.6l1.5 1.6"/></g></svg>
<span style="left:371.7px;top:302px;font-size:5.2px;line-height:12px;color:#2f88d4;font-weight:bold;letter-spacing:0;-webkit-text-stroke:.2px #2f88d4">123</span>
<span class="hd" style="left:385.8px;top:302px;font-size:7.2px;line-height:12px;color:#3a3a3a;letter-spacing:.25px">salary</span>
<svg style="left:411.5px;top:304.3px" width="7.8" height="7" viewBox="0 0 7.8 7"><g fill="none" stroke="#9a9a9a" stroke-width=".75"><path d="M1.8 .4v6M.3 4.8l1.5 1.6L3.3 4.8"/><path d="M5.9 6.6v-6M4.4 2.2L5.9.6l1.5 1.6"/></g></svg>
<span style="left:430px;top:302px;font-size:5.2px;line-height:12px;color:#2f88d4;font-weight:bold;letter-spacing:0;-webkit-text-stroke:.2px #2f88d4">ABC</span>
<span class="hd" style="left:444px;top:302px;font-size:7.2px;line-height:12px;color:#3a3a3a;letter-spacing:.25px">department</span>
<svg style="left:488.5px;top:304.3px" width="7.8" height="7" viewBox="0 0 7.8 7"><g fill="none" stroke="#9a9a9a" stroke-width=".75"><path d="M1.8 .4v6M.3 4.8l1.5 1.6L3.3 4.8"/><path d="M5.9 6.6v-6M4.4 2.2L5.9.6l1.5 1.6"/></g></svg>
<span style="left:179.6px;top:317px;font-size:7.2px;line-height:12px;color:#333;letter-spacing:.25px">1</span>
<span style="left:214.2px;top:317px;font-size:7.2px;line-height:12px;color:#333;letter-spacing:.25px">11</span>
<span style="left:259.8px;top:317px;font-size:7.2px;line-height:12px;color:#333;letter-spacing:.25px">Karen</span>
<span style="left:321.7px;top:317px;font-size:7.2px;line-height:12px;color:#333;letter-spacing:.25px">27</span>
<span style="left:371.7px;top:317px;font-size:7.2px;line-height:12px;color:#333;letter-spacing:.25px">52000</span>
<span style="left:430px;top:317px;font-size:7.2px;line-height:12px;color:#333;letter-spacing:.25px">Marketing</span>
<span style="left:179.6px;top:331px;font-size:7.2px;line-height:12px;color:#333;letter-spacing:.25px">2</span>
<span style="left:214.2px;top:331px;font-size:7.2px;line-height:12px;color:#333;letter-spacing:.25px">12</span>
<span style="left:259.8px;top:331px;font-size:7.2px;line-height:12px;color:#333;letter-spacing:.25px">Larry</span>
<span style="left:321.7px;top:331px;font-size:7.2px;line-height:12px;color:#333;letter-spacing:.25px">28</span>
<span style="left:371.7px;top:331px;font-size:7.2px;line-height:12px;color:#333;letter-spacing:.25px">53000</span>
<span style="left:430px;top:331px;font-size:7.2px;line-height:12px;color:#333;letter-spacing:.25px">Finance</span>
<span style="left:179.6px;top:346px;font-size:7.2px;line-height:12px;color:#333;letter-spacing:.25px">3</span>
<span style="left:214.2px;top:346px;font-size:7.2px;line-height:12px;color:#333;letter-spacing:.25px">17</span>
<span style="left:259.8px;top:346px;font-size:7.2px;line-height:12px;color:#333;letter-spacing:.25px">Quincy</span>
<span style="left:321.7px;top:346px;font-size:7.2px;line-height:12px;color:#333;letter-spacing:.25px">39</span>
<span style="left:371.7px;top:346px;font-size:7.2px;line-height:12px;color:#333;letter-spacing:.25px">58000</span>
<span style="left:430px;top:346px;font-size:7.2px;line-height:12px;color:#333;letter-spacing:.25px">Finance</span>
<span style="left:179.6px;top:361px;font-size:7.2px;line-height:12px;color:#333;letter-spacing:.25px">4</span>
<span style="left:214.2px;top:361px;font-size:7.2px;line-height:12px;color:#333;letter-spacing:.25px">18</span>
<span style="left:259.8px;top:361px;font-size:7.2px;line-height:12px;color:#333;letter-spacing:.25px">Rebecca</span>
<span style="left:321.7px;top:361px;font-size:7.2px;line-height:12px;color:#333;letter-spacing:.25px">41</span>
<span style="left:371.7px;top:361px;font-size:7.2px;line-height:12px;color:#333;letter-spacing:.25px">59000</span>
<span style="left:430px;top:361px;font-size:7.2px;line-height:12px;color:#333;letter-spacing:.25px">HR</span>
<span style="left:179.6px;top:375px;font-size:7.2px;line-height:12px;color:#333;letter-spacing:.25px">5</span>
<span style="left:214.2px;top:375px;font-size:7.2px;line-height:12px;color:#333;letter-spacing:.25px">20</span>
<span style="left:259.8px;top:375px;font-size:7.2px;line-height:12px;color:#333;letter-spacing:.25px">Tina</span>
<span style="left:321.7px;top:375px;font-size:7.2px;line-height:12px;color:#333;letter-spacing:.25px">50</span>
<span style="left:371.7px;top:375px;font-size:7.2px;line-height:12px;color:#333;letter-spacing:.25px">61000</span>
<span style="left:430px;top:375px;font-size:7.2px;line-height:12px;color:#333;letter-spacing:.25px">Marketing</span>
<span style="left:179.6px;top:390px;font-size:7.2px;line-height:12px;color:#333;letter-spacing:.25px">6</span>
<span style="left:214.2px;top:390px;font-size:7.2px;line-height:12px;color:#333;letter-spacing:.25px">13</span>
<span style="left:259.8px;top:390px;font-size:7.2px;line-height:12px;color:#333;letter-spacing:.25px">Megan</span>
<span style="left:321.7px;top:390px;font-size:7.2px;line-height:12px;color:#333;letter-spacing:.25px">27</span>
<span style="left:371.7px;top:390px;font-size:7.2px;line-height:12px;color:#333;letter-spacing:.25px">54000</span>
<span style="left:430px;top:390px;font-size:7.2px;line-height:12px;color:#333;letter-spacing:.25px">HR</span>
<span style="left:179.6px;top:404px;font-size:7.2px;line-height:12px;color:#333;letter-spacing:.25px">7</span>
<span style="left:214.2px;top:404px;font-size:7.2px;line-height:12px;color:#333;letter-spacing:.25px">14</span>
<span style="left:259.8px;top:404px;font-size:7.2px;line-height:12px;color:#333;letter-spacing:.25px">Nathan</span>
<span style="left:321.7px;top:404px;font-size:7.2px;line-height:12px;color:#333;letter-spacing:.25px">35</span>
<span style="left:371.7px;top:404px;font-size:7.2px;line-height:12px;color:#333;letter-spacing:.25px">55000</span>
<span style="left:430px;top:404px;font-size:7.2px;line-height:12px;color:#333;letter-spacing:.25px">Finance</span>
<span style="left:179.6px;top:419px;font-size:7.2px;line-height:12px;color:#333;letter-spacing:.25px">8</span>
<span style="left:214.2px;top:419px;font-size:7.2px;line-height:12px;color:#333;letter-spacing:.25px">21</span>
<span style="left:259.8px;top:419px;font-size:7.2px;line-height:12px;color:#333;letter-spacing:.25px">Kathy</span>
<span style="left:321.7px;top:419px;font-size:7.2px;line-height:12px;color:#333;letter-spacing:.25px">35</span>
<span style="left:371.7px;top:419px;font-size:7.2px;line-height:12px;color:#333;letter-spacing:.25px">80000</span>
<span style="left:430px;top:419px;font-size:7.2px;line-height:12px;color:#333;letter-spacing:.25px">Support</span>
<span style="left:179.6px;top:434px;font-size:7.2px;line-height:12px;color:#333;letter-spacing:.25px">9</span>
<span style="left:214.2px;top:434px;font-size:7.2px;line-height:12px;color:#333;letter-spacing:.25px">22</span>
<span style="left:259.8px;top:434px;font-size:7.2px;line-height:12px;color:#333;letter-spacing:.25px">Leo</span>
<span style="left:321.7px;top:434px;font-size:7.2px;line-height:12px;color:#333;letter-spacing:.25px">28</span>
<span style="left:371.7px;top:434px;font-size:7.2px;line-height:12px;color:#333;letter-spacing:.25px">90000</span>
<span style="left:430px;top:434px;font-size:7.2px;line-height:12px;color:#333;letter-spacing:.25px">Sales</span>
<span style="left:179.6px;top:448px;font-size:7.2px;line-height:12px;color:#333;letter-spacing:.25px">10</span>
<span style="left:214.2px;top:448px;font-size:7.2px;line-height:12px;color:#333;letter-spacing:.25px">16</span>
<span style="left:259.8px;top:448px;font-size:7.2px;line-height:12px;color:#333;letter-spacing:.25px">Paul</span>
<span style="left:321.7px;top:448px;font-size:7.2px;line-height:12px;color:#333;letter-spacing:.25px">37</span>
<span style="left:371.7px;top:448px;font-size:7.2px;line-height:12px;color:#333;letter-spacing:.25px">130000</span>
<span style="left:430px;top:448px;font-size:7.2px;line-height:12px;color:#333;letter-spacing:.25px">Marketing</span>
<span style="left:179.6px;top:463px;font-size:7.2px;line-height:12px;color:#333;letter-spacing:.25px">11</span>
<span style="left:214.2px;top:463px;font-size:7.2px;line-height:12px;color:#333;letter-spacing:.25px">19</span>
<span style="left:259.8px;top:463px;font-size:7.2px;line-height:12px;color:#333;letter-spacing:.25px">Steve</span>
<span style="left:321.7px;top:463px;font-size:7.2px;line-height:12px;color:#333;letter-spacing:.25px">41</span>
<span style="left:371.7px;top:463px;font-size:7.2px;line-height:12px;color:#333;letter-spacing:.25px">120000</span>
<span style="left:430px;top:463px;font-size:7.2px;line-height:12px;color:#333;letter-spacing:.25px">IT</span>
<span style="left:179.6px;top:477px;font-size:7.2px;line-height:12px;color:#333;letter-spacing:.25px">12</span>
<span style="left:214.2px;top:477px;font-size:7.2px;line-height:12px;color:#333;letter-spacing:.25px">15</span>
<span style="left:259.8px;top:477px;font-size:7.2px;line-height:12px;color:#333;letter-spacing:.25px">Olivia</span>
<span style="left:321.7px;top:477px;font-size:7.2px;line-height:12px;color:#333;letter-spacing:.25px">35</span>
<span style="left:371.7px;top:477px;font-size:7.2px;line-height:12px;color:#333;letter-spacing:.25px">85000</span>
<span style="left:430px;top:477px;font-size:7.2px;line-height:12px;color:#333;letter-spacing:.25px">IT</span>
<span class="vt" id="v_val" style="left:803.6px;top:328px">VALUE</span>
<svg style="left:803.8px;top:331.8px" width="9" height="8.8" viewBox="0 0 9 8.8"><path d="M.3 .3h5.4l3 2.6v5.6H.3z" fill="#2480cc"/><path d="M5.5 .3v2.8h3.2" fill="#a9cdef"/><rect x="3.4" y="4.3" width="4" height="3.2" fill="#fff"/></svg>
<span class="vt" id="v_grp" style="left:803.6px;top:391.5px">GROUPING</span>
<svg style="left:803.8px;top:395.2px" width="9" height="9" viewBox="0 0 9 9"><circle cx="4.5" cy="4.5" r="3.9" fill="#eaf3fb" stroke="#5a9fd6" stroke-width=".8"/><path d="M4.5 .6v7.8M.6 4.5h7.8" stroke="#5a9fd6" stroke-width=".7"/></svg>
<svg style="left:157px;top:521px" width="12" height="10" viewBox="157 521 12 10"><path d="M165.4 529.2A4.15 4.15 0 1 1 166.7 525.4" fill="none" stroke="#555" stroke-width=".95"/><path d="M168.2 525.2L166.6 528.2 164.8 525.6z" fill="#555"/></svg>
<svg style="position:absolute;left:169.3px;top:524.5px" width="4" height="3.3" viewBox="0 0 4 3.3"><polyline points="0.4,0.6 2,2.3 3.6,0.6" fill="none" stroke="#444" stroke-width="1.2" stroke-linecap="round" stroke-linejoin="round"/></svg>
<div style="left:182.4px;top:519px;width:45.4px;height:13.6px;background:#fff;border:1px solid #dcdcdc;border-radius:2px"></div>
<span style="left:187.5px;top:520px;font-size:7.6px;line-height:12px;color:#333">200</span>
<svg style="left:215.6px;top:520.6px" width="7" height="10" viewBox="0 0 7 10"><rect x=".4" y=".4" width="6.2" height="9.2" rx="3" fill="#f4f4f4" stroke="#ddd" stroke-width=".5"/><path d="M2 4l1.5-1.6L5 4M2 6l1.5 1.6L5 6" fill="none" stroke="#555" stroke-width=".8"/></svg>
<svg style="left:235.8px;top:522.9px;opacity:1" width="9.6" height="8.4" viewBox="0 0 9.6 8.4"><g stroke="#2480cc" stroke-width="1"><path d="M.3 1h8M.3 3.4h6.4M.3 5.8h4.4"/></g><path d="M7.2 4.2v4M5.2 6.2h4" stroke="#3aa935" stroke-width="1.1"/></svg>
<svg style="left:254px;top:522.9px;opacity:0.5" width="9.6" height="8.4" viewBox="0 0 9.6 8.4"><g stroke="#2480cc" stroke-width="1"><path d="M.3 1h8M.3 3.4h6.4M.3 5.8h4.4"/></g><path d="M5.6 5.4h3.4v2.4H5.6z" fill="none" stroke="#3aa935" stroke-width=".7"/></svg>
<svg style="left:272.6px;top:522.9px;opacity:0.5" width="9.6" height="8.4" viewBox="0 0 9.6 8.4"><g stroke="#2480cc" stroke-width="1"><path d="M.3 1h8M.3 3.4h6.4M.3 5.8h4.4"/></g><path d="M5.4 6.6h4" stroke="#e0555f" stroke-width="1.1"/></svg>
<svg style="left:291.6px;top:521.6px;opacity:.55" width="9.6" height="9.6" viewBox="0 0 9.6 9.6"><g fill="none" stroke="#2480cc" stroke-width=".9"><rect x="2.6" y=".5" width="4.6" height="6" rx=".6"/><rect x=".5" y="3" width="4.6" height="6" rx=".6" fill="#f2f2f2"/></g><path d="M6.4 6.4h2.8M8 5.2l1.2 1.2L8 7.6" fill="none" stroke="#3aa935" stroke-width=".7"/></svg>
<svg style="left:310.8px;top:522px;opacity:.55" width="9.6" height="8.4" viewBox="0 0 9.6 8.4"><path d="M2.5 7.2a2.1 2.1 0 0 1-.2-4.2 2.7 2.7 0 0 1 5.2-.3 2.2 2.2 0 0 1-.2 4.5z" fill="none" stroke="#3aa935" stroke-width=".8"/><path d="M4.8 6.4V3.4M3.6 4.6l1.2-1.3L6 4.6" fill="none" stroke="#3aa935" stroke-width=".8"/></svg>
<span class="tb" style="left:322.4px;color:#aeaeae">SAVE</span>
<svg style="left:348.6px;top:521.4px;opacity:.6" width="9.6" height="10" viewBox="0 0 9.6 10"><g fill="none" stroke="#2480cc" stroke-width=".9"><path d="M6.4 2.2V.5H2.6M.500 2.5v6.6h4.4M.5 2.5h2.1V.5"/></g><path d="M5.6 5.6l3.4 3.6M9 5.6L5.6 9.2" stroke="#e0555f" stroke-width="1"/></svg>
<span class="tb" style="left:360.2px;color:#aeaeae">REVERT</span>
<svg style="left:394.8px;top:521.4px;opacity:.6" width="9.6" height="10" viewBox="0 0 9.6 10"><g fill="none" stroke="#2480cc" stroke-width=".9"><path d="M2.7 7V1.1c0-.4.2-.6.6-.6h4.4M7 .8v3.6"/><path d="M.4 7.8h4.4" stroke-width="1.1"/><circle cx="6.8" cy="6.8" r="1.7"/><path d="M8 8l1.3 1.4"/></g></svg>
<span class="tb" style="left:406.9px;color:#aeaeae">SCRIPT</span>
<svg style="left:440.6px;top:521.8px" width="8" height="9" viewBox="0 0 8 9"><g fill="none" stroke="#2480cc" stroke-width="1"><path d="M.3 .7h7.4"/><path d="M4 8.8V3M1.8 5L4 2.8 6.2 5"/></g></svg>
<span class="tb" style="left:451.6px;color:#555">EXPORT</span>
<div style="left:480.9px;top:518.1px;width:69.3px;height:15.7px;border:2.1px solid #c03016"></div>
<svg style="left:486.4px;top:521.6px" width="10.4" height="9" viewBox="0 0 10.4 9"><rect x=".5" y=".5" width="9" height="7.6" rx=".8" fill="#eaf3fb" stroke="#2480cc" stroke-width=".9"/><rect x=".5" y=".5" width="9" height="2" fill="#2480cc"/><path d="M2.3 3.8v3M4 3.8v3M5.7 3.8v2" stroke="#2480cc" stroke-width=".7"/><circle cx="8.2" cy="7" r="1.9" fill="#f2f2f2"/><path d="M8.2 5.6v2.8M6.8 7h2.8" stroke="#2480cc" stroke-width=".8"/></svg>
<span class="tb" style="left:498.8px;color:#555" id="addds">ADD DATASET</span>
<span id="succ" style="left:755.4px;top:520px;font-size:7px;line-height:12px;color:#8a8a8a;letter-spacing:.15px">Success - 25ms</span>
</div></body></html>
